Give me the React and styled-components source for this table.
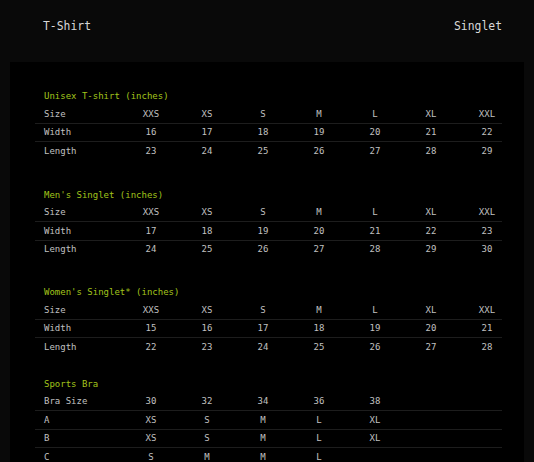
import React from "react";
import styled, { createGlobalStyle } from "styled-components";

const GlobalStyle = createGlobalStyle`
  html, body {
    margin: 0;
    padding: 0;
    background: #090909;
  }
  body {
    font-family: "DejaVu Sans Mono", "Liberation Mono", monospace;
  }
`;

const sections = [
  {
    title: "Unisex T-shirt (inches)",
    head: ["Size", "XXS", "XS", "S", "M", "L", "XL", "XXL"],
    rows: [
      ["Width", 16, 17, 18, 19, 20, 21, 22],
      ["Length", 23, 24, 25, 26, 27, 28, 29],
    ],
    gap: 25,
  },
  {
    title: "Men's Singlet (inches)",
    head: ["Size", "XXS", "XS", "S", "M", "L", "XL", "XXL"],
    rows: [
      ["Width", 17, 18, 19, 20, 21, 22, 23],
      ["Length", 24, 25, 26, 27, 28, 29, 30],
    ],
    gap: 24,
  },
  {
    title: "Women's Singlet* (inches)",
    head: ["Size", "XXS", "XS", "S", "M", "L", "XL", "XXL"],
    rows: [
      ["Width", 15, 16, 17, 18, 19, 20, 21],
      ["Length", 22, 23, 24, 25, 26, 27, 28],
    ],
    gap: 18,
  },
  {
    title: "Sports Bra",
    head: ["Bra Size", 30, 32, 34, 36, 38],
    rows: [
      ["A", "XS", "S", "M", "L", "XL"],
      ["B", "XS", "S", "M", "L", "XL"],
      ["C", "S", "M", "M", "L", ""],
    ],
    gap: 0,
  },
];

const Page = styled.div`
  width: 534px;
  height: 462px;
  overflow: hidden;
  background: #090909;
`;

const Header = styled.header`
  height: 62px;
  display: flex;
  justify-content: space-between;
  align-items: flex-start;
  padding: 19px 32px 0 43px;
  box-sizing: border-box;
  font-size: 11.4px;
  line-height: 14px;
  color: #d8d8d8;
`;

const Panel = styled.main`
  margin: 0 10px;
  background: #000;
  padding: 25px 0 0 25px;
  min-height: 400px;
`;

const Section = styled.section`
  margin-bottom: ${(p) => p.$gap}px;
`;

const Title = styled.h3`
  margin: 0;
  height: 18px;
  line-height: 18px;
  padding-left: 9px;
  font-size: 9px;
  font-weight: normal;
  color: #a2c41b;
`;

const Row = styled.div`
  width: 467px;
  height: 18.5px;
  box-sizing: border-box;
  display: grid;
  grid-template-columns: 88px repeat(7, 56px);
  align-items: center;
  font-size: 9px;
  color: #c0c0c0;
  border-bottom: 1px solid ${(p) => (p.$last ? "transparent" : "#1d1d1d")};
`;

const Label = styled.span`
  padding-left: 9px;
`;

const Cell = styled.span`
  text-align: center;
`;

const SizeTable = ({ title, head, rows, gap }) => (
  <Section $gap={gap}>
    <Title>{title}</Title>
    {[head, ...rows].map((r, i) => (
      <Row key={i} $last={i === rows.length}>
        <Label>{r[0]}</Label>
        {r.slice(1).map((v, j) => (
          <Cell key={j}>{v}</Cell>
        ))}
      </Row>
    ))}
  </Section>
);

export default function App() {
  return (
    <Page>
      <GlobalStyle />
      <Header>
        <span>T-Shirt</span>
        <span>Singlet</span>
      </Header>
      <Panel>
        {sections.map((s) => (
          <SizeTable key={s.title} {...s} />
        ))}
      </Panel>
    </Page>
  );
}
